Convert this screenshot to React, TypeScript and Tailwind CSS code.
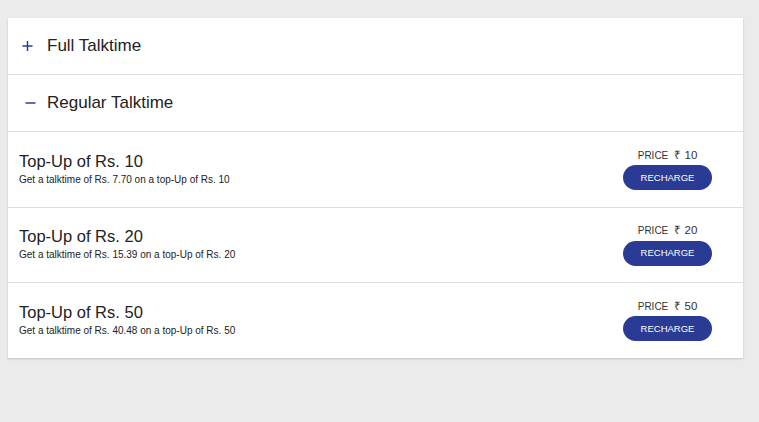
const PLANS = [
  { amount: 10, talktime: '7.70' },
  { amount: 20, talktime: '15.39' },
  { amount: 50, talktime: '40.48' },
];

function Section({ label, open }: { label: string; open: boolean }) {
  return (
    <div className="flex h-[57px] items-center border-b border-[#dedede] pl-[14px]">
      <span className="flex w-[11px] justify-center text-[#2a3b96]">
        {open ? (
          <svg width="12" height="12" viewBox="0 0 12 12" className="translate-x-[3px]">
            <path d="M0.5 6h11" stroke="currentColor" strokeWidth="1.6" />
          </svg>
        ) : (
          <svg width="12" height="12" viewBox="0 0 12 12">
            <path d="M0.5 6h11M6 0.5v11" stroke="currentColor" strokeWidth="1.6" />
          </svg>
        )}
      </span>
      <span className="ml-[14px] text-[17px] text-[#222]">{label}</span>
    </div>
  );
}

export default function App() {
  return (
    <div className="min-h-[422px] bg-[#ebebeb] pb-4 pl-2 pr-4 pt-[18px] font-['Liberation_Sans',Arial,sans-serif]">
      <div className="bg-white shadow-[0_1px_2px_rgba(0,0,0,0.18)]">
        <Section label="Full Talktime" open={false} />
        <Section label="Regular Talktime" open={true} />
        {PLANS.map((p, i) => (
          <div
            key={p.amount}
            className={`flex items-center justify-between pl-[11px] pr-[31px] ${
              i === 0 ? 'h-[76px]' : 'h-[75px]'
            } ${i < PLANS.length - 1 ? 'border-b border-[#dedede]' : ''}`}
          >
            <div className="mb-[3px]">
              <div className="text-[16.5px] leading-[20px] text-[#222]">Top-Up of Rs. {p.amount}</div>
              <div className="mt-[2px] text-[10px] leading-[13px] text-[#222]">
                Get a talktime of Rs. {p.talktime} on a top-Up of Rs. {p.amount}
              </div>
            </div>
            <div className="mb-[2px] flex flex-col items-center">
              <div className="flex items-baseline text-[#333]">
                <span className="text-[10px]">PRICE</span>
                <span className="ml-[6px] text-[11.5px]">₹ {p.amount}</span>
              </div>
              <button className="mt-[1px] h-[25px] w-[89px] rounded-full bg-[#2a3b96] text-[9.5px] text-white">
                RECHARGE
              </button>
            </div>
          </div>
        ))}
      </div>
    </div>
  );
}
